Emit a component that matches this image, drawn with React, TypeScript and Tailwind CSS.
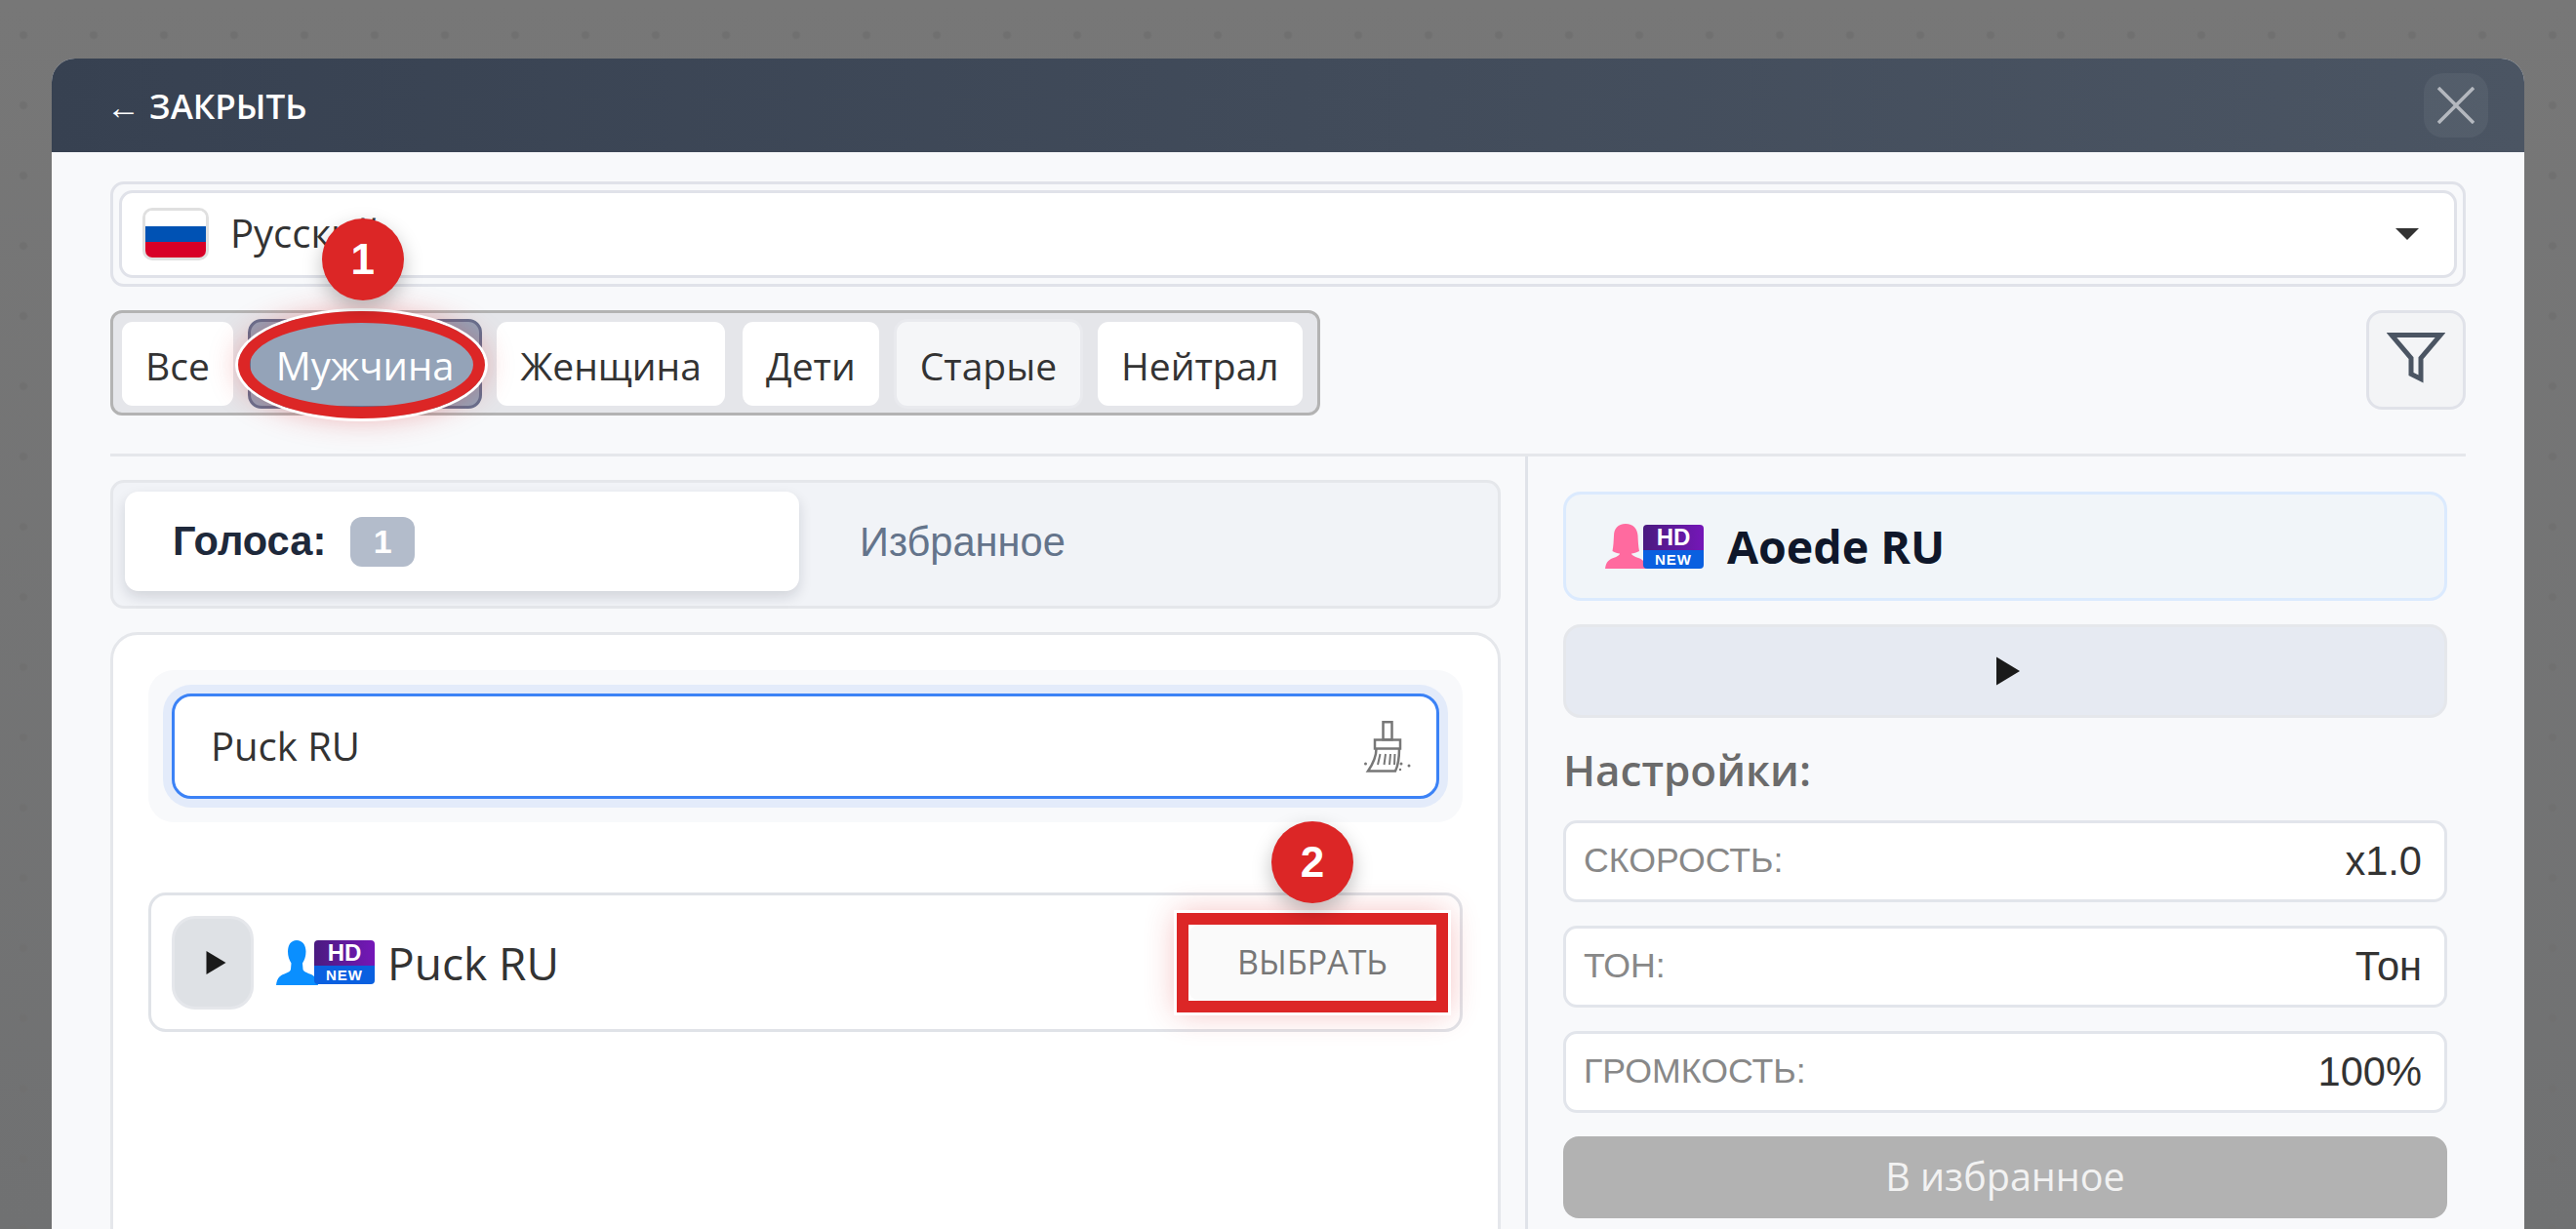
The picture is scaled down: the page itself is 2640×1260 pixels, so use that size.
import React from 'react';

const FONT = "font-['Open_Sans','Noto_Sans',sans-serif]";
const ARIAL = "font-['Liberation_Sans',Arial,sans-serif]";

const HdBadge = () => (
  <div className={`relative z-10 flex h-[45px] w-[62px] shrink-0 flex-col overflow-hidden rounded-[4px] ${ARIAL} font-bold text-white`}>
    <div className="flex h-[26px] items-center justify-center bg-gradient-to-r from-[#4a1a80] to-[#7516b8] text-[24px] leading-none">HD</div>
    <div className="flex flex-1 items-center justify-center bg-[#0a60e0] text-[15px] leading-none tracking-[1px]">NEW</div>
  </div>
);

const MaleIcon = () => (
  <svg width="43" height="46" viewBox="0 0 43 46" className="-mr-[4px] shrink-0">
    <path
      d="M21 0c6 0 9.500 5 9.500 11.500 0 5-1.500 9-3.500 12l.5 6c0 2 3 3.500 7 5 4 1.500 7.500 3.500 8.500 11.500H0c1-8 4.500-10 8.500-11.500 4-1.500 6.500-3 6.500-5l.5-6c-2-3-3.500-7-3.500-12C12 5 15 0 21 0z"
      fill="#0a8fff"
    />
  </svg>
);

const FemaleIcon = () => (
  <svg width="43" height="46" viewBox="0 0 43 46" className="-mr-[4px] shrink-0">
    <path
      d="M21 0c8 0 12 5 12.500 12 .3 6 .5 11 1.500 16-3 1.500-5.500 2.200-8 2.500 0 1.500 3 3 7 4.500 4 1.500 7.500 3.500 9 11H0c1-7.500 4.500-9.500 8.500-11 4-1.500 6.500-3 6.500-4.500-2.500-.3-5-1-7.500-2.500 1-5 1.200-10 1.500-16C9 5 13 0 21 0z"
      fill="#ff6a9f"
    />
  </svg>
);

const PlayGlyph = ({ w, h }: { w: number; h: number }) => (
  <svg width={w} height={h} viewBox="0 0 10 12">
    <polygon points="0,0 10,6 0,12" fill="#1a1a1a" />
  </svg>
);

const BroomIcon = () => (
  <svg width="48" height="53" viewBox="0 0 48 53" fill="none" stroke="#777" strokeWidth="2.500">
    <rect x="19.500" y="1.250" width="9" height="18" />
    <rect x="11" y="19.500" width="26" height="9" />
    <path d="M12.500 28.500c0 8-3 15-8.500 23h28c3-6 4-14 4-23" />
    <path d="M16.500 34l-2.500 11M22 34l-1.500 11M27 34l-1 11M31.500 34l-.500 11" strokeWidth="2" />
    <circle cx="1.500" cy="44" r="1.500" fill="#777" stroke="none" />
    <circle cx="38" cy="44" r="1.500" fill="#777" stroke="none" />
    <circle cx="46" cy="46" r="1.500" fill="#777" stroke="none" />
    <circle cx="37" cy="50" r="1.200" fill="#777" stroke="none" />
  </svg>
);

const Marker = ({ n, className }: { n: number; className: string }) => (
  <div
    className={`absolute z-30 flex h-[84px] w-[84px] items-center justify-center rounded-full bg-[#dc2626] ${ARIAL} text-[44px] leading-none font-bold text-white shadow-[0_8px_20px_rgba(0,0,0,0.25)] ${className}`}
  >
    {n}
  </div>
);

const tabs = ['Все', 'Мужчина', 'Женщина', 'Дети', 'Старые', 'Нейтрал'];

const settings = [
  { label: 'СКОРОСТЬ:', value: 'x1.0' },
  { label: 'ТОН:', value: 'Тон' },
  { label: 'ГРОМКОСТЬ:', value: '100%' },
];

export default function App() {
  return (
    <div className="h-[1260px] w-[2640px] overflow-hidden bg-[#757575] bg-[radial-gradient(circle_at_24px_36px,#707070_3px,transparent_5px),linear-gradient(180deg,#777777,#707172)] bg-[size:72px_72px,100%_100%] px-[53px] pt-[60px]">
      <div className={`flex h-[1300px] flex-col overflow-hidden rounded-t-[24px] bg-[#f8f9fb] ${FONT}`}>
        {/* Header */}
        <div className="flex h-[96px] shrink-0 items-center justify-between bg-gradient-to-r from-[#374151] to-[#4b5563] pr-[37px] pl-[56px]">
          <span className="pt-[2px] text-[35px] font-semibold text-white">← ЗАКРЫТЬ</span>
          <button className="flex h-[66px] w-[66px] items-center justify-center rounded-[20px] bg-white/5">
            <svg width="38" height="38" viewBox="0 0 38 38" stroke="#b4b8bf" strokeWidth="3.500">
              <path d="M1 1l36 36M37 1L1 37" />
            </svg>
          </button>
        </div>

        <div className="flex flex-1 flex-col px-[60px] pt-[30px]">
          {/* Language select */}
          <div className="h-[108px] rounded-[14px] border-[3px] border-[#e0e2e9] p-[6px]">
            <div className="flex h-full items-center justify-between rounded-[14px] border-[3px] border-[#e0e2e9] bg-white pr-[36px] pl-[21px]">
              <div className="flex items-center gap-[22px]">
                <div className="h-[54px] w-[68px] overflow-hidden rounded-[10px] border-[3px] border-[#e0e0e0]">
                  <svg width="62" height="48" viewBox="0 0 62 48" preserveAspectRatio="none" className="block">
                    <rect width="62" height="16" fill="#fff" />
                    <rect y="16" width="62" height="16" fill="#0052b4" />
                    <rect y="32" width="62" height="16" fill="#d80027" />
                  </svg>
                </div>
                <span className="-mt-[3px] text-[40px] leading-none text-[#333]">Русский</span>
              </div>
              <svg width="24" height="12" viewBox="0 0 24 12">
                <polygon points="0,0 24,0 12,12" fill="#333" />
              </svg>
            </div>
          </div>

          {/* Category filter */}
          <div className="mt-[24px] flex items-start justify-between">
            <div className="flex gap-[12px] rounded-[12px] border-[3px] border-[#b3b3b3] bg-[#e5e6ea] pt-[6px] pr-[12px] pb-[4px] pl-[6px]">
              {tabs.map((tab) => (
                <div
                  key={tab}
                  className={`relative flex h-[92px] items-center rounded-[14px] border-[3px] pt-[3px] leading-none ${
                    tab === 'Мужчина'
                      ? 'border-[#64708f] bg-[#94a3b8] px-[26px] text-[40px] text-white'
                      : tab === 'Старые'
                        ? 'border-[#e9eaee] bg-[#f5f6f8] px-[24px] text-[39px] text-[#333]'
                        : 'border-transparent bg-white bg-clip-padding px-[24px] text-[39px] text-[#333]'
                  }`}
                >
                  {tab}
                  {tab === 'Мужчина' && (
                    <>
                      <div className="absolute top-[-11px] left-[-13px] z-20 h-[110px] w-[253px] rounded-[50%] border-[12px] border-[#dc2626] shadow-[0_0_0_3px_#fff,0_0_30px_rgba(220,38,38,0.35)]" />
                      <Marker n={1} className="top-[-106px] left-[73px]" />
                    </>
                  )}
                </div>
              ))}
            </div>
            <button className="flex h-[102px] w-[102px] items-center justify-center rounded-[16px] border-[3px] border-[#e0e2e9] bg-[#f3f4f6]">
              <svg width="60" height="60" viewBox="0 0 24 24" fill="none" stroke="#4b5563" strokeWidth="2" className="-mt-[6px]">
                <polygon points="22 3 2 3 10 12.460 10 19 14 21 14 12.460 22 3" />
              </svg>
            </button>
          </div>

          <div className="mt-[39px] flex flex-1 border-t-[3px] border-[#e5e7eb]">
            {/* Voice list */}
            <div className="w-[1453px] shrink-0 border-r-[3px] border-[#e0e3e9] pt-[24px] pr-[25px]">
              <div className="flex h-[132px] items-start gap-[13px] rounded-[14px] border-[3px] border-[#e5e7eb] bg-[#f1f3f7] px-[12px] pt-[9px]">
                <div className={`flex h-[102px] w-[691px] items-center gap-[25px] rounded-[14px] bg-white pl-[49px] shadow-[0_6px_14px_rgba(15,23,42,0.14)] ${ARIAL}`}>
                  <span className="text-[41.600px] font-bold text-[#1e293b]">Голоса:</span>
                  <span className="flex h-[51px] w-[66px] items-center justify-center rounded-[12px] bg-[#b3bccb] text-[34px] font-bold text-white">1</span>
                </div>
                <div className={`flex h-[102px] flex-1 items-center pt-[2px] pl-[49px] text-[41.600px] text-[#64748b] ${ARIAL}`}>Избранное</div>
              </div>

              <div className="mt-[24px] h-[700px] rounded-[28px] border-[3px] border-[#e5e7eb] bg-white px-[36px] pt-[36px]">
                <div className="rounded-[26px] bg-[#f8f9fb] p-[24px]">
                  <div className="flex h-[108px] items-center justify-between rounded-[20px] border-[3px] border-[#3b82f6] bg-white pr-[26px] pl-[37px] shadow-[0_0_0_9px_#e3ebfa]">
                    <span className="text-[40px] leading-none text-[#333]">Puck RU</span>
                    <BroomIcon />
                  </div>
                </div>

                <div className="relative mt-[72px] flex h-[143px] items-center justify-between rounded-[18px] border-[3px] border-[#e0e3e8] bg-white pr-[24px] pl-[21px]">
                  <div className="flex items-center">
                    <button className="mr-[23px] flex h-[96px] w-[84px] items-center justify-center rounded-[24px] border-[3px] border-[#e5e7eb] bg-[#dee1e5] pl-[6px]">
                      <PlayGlyph w={21} h={24} />
                    </button>
                    <MaleIcon />
                    <HdBadge />
                    <span className="ml-[13px] text-[46px] leading-none text-[#333]">Puck RU</span>
                  </div>
                  <div className="relative flex h-[78px] w-[254px] items-center justify-center rounded-[12px] bg-[#fafafa] text-[34px] text-[#777]">
                    ВЫБРАТЬ
                    <div className="absolute -inset-[12px] border-[12px] border-[#dc2626] shadow-[0_0_0_3px_#fff,0_0_30px_rgba(220,38,38,0.3)]" />
                    <Marker n={2} className="top-[-106px] left-[85px]" />
                  </div>
                </div>
              </div>
            </div>

            {/* Selected voice */}
            <div className="flex-1 pt-[36px] pr-[19px] pl-[36px]">
              <div className="flex h-[112px] items-center rounded-[18px] border-[3px] border-[#dbeafe] bg-[#f1f5f9] pl-[40px]">
                <FemaleIcon />
                <HdBadge />
                <span className="ml-[24px] text-[46.500px] leading-none font-bold text-[#0f172a]">Aoede RU</span>
              </div>
              <button className="mt-[24px] flex h-[96px] w-full items-center justify-center rounded-[18px] border-[3px] border-[#e5e7eb] bg-[#e6eaf2] pl-[6px]">
                <PlayGlyph w={24} h={30} />
              </button>
              <div className="mt-[24px] flex h-[57px] items-center text-[44px] leading-none font-semibold text-[#6b6b6b]">Настройки:</div>
              <div className="mt-[24px] flex flex-col gap-[24px]">
                {settings.map((row) => (
                  <div
                    key={row.label}
                    className={`flex h-[84px] items-center justify-between rounded-[14px] border-[3px] border-[#e2e5eb] bg-white pr-[23px] pl-[18px] ${ARIAL}`}
                  >
                    <span className="text-[35.700px] text-[#888]">{row.label}</span>
                    <span className="text-[41.600px] text-[#333]">{row.value}</span>
                  </div>
                ))}
                <button className="flex h-[84px] w-full items-center justify-center rounded-[16px] bg-[#b2b2b2] text-[39.500px] text-[#f2f2f2]">В избранное</button>
              </div>
            </div>
          </div>
        </div>
      </div>
    </div>
  );
}
